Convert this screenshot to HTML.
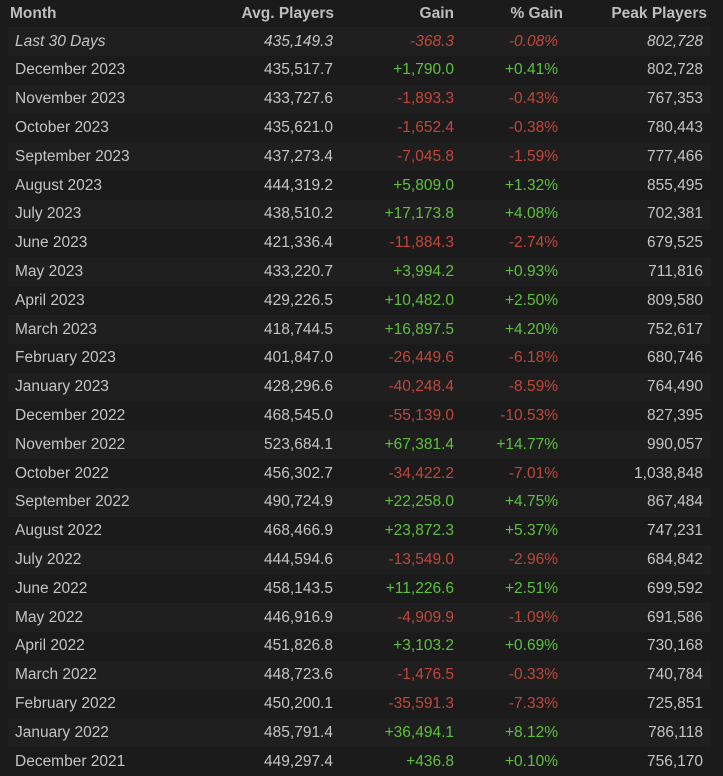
<!DOCTYPE html>
<html><head><style>
body{margin:0;background:#1b1b1b;width:723px;height:775px;overflow:hidden;font-family:"Liberation Sans",Arial,sans-serif;font-size:15.5px;color:#c4c4c4}
.h{position:absolute;top:1px;left:0;width:723px;height:26px;font-weight:bold;color:#bdbdbd;font-size:15.5px}
.r{position:absolute;left:0;width:723px;height:28.8px}
.r.e::before{content:"";position:absolute;left:8px;right:12px;top:0;bottom:0;background:#1f1f1f}
.c{position:absolute;top:50%;transform:translateY(-50%);white-space:nowrap}
.m{left:15px}.a{right:390px}.g{right:269px}.p{right:165px}.k{right:20px}
.h .m{left:10px}.h .a{right:389px}.h .g{right:269px}.h .p{right:160px}.h .k{right:16px}
.red{color:#c0473a}.grn{color:#5fc03f}
.i{font-style:italic}
</style></head><body>
<div class="h"><span class="c m">Month</span><span class="c a">Avg. Players</span><span class="c g">Gain</span><span class="c p">% Gain</span><span class="c k">Peak Players</span></div>
<div id="t"></div>
<script>
var d=[["Last 30 Days","435,149.3","-368.3","-0.08%","802,728"],
["December 2023","435,517.7","+1,790.0","+0.41%","802,728"],
["November 2023","433,727.6","-1,893.3","-0.43%","767,353"],
["October 2023","435,621.0","-1,652.4","-0.38%","780,443"],
["September 2023","437,273.4","-7,045.8","-1.59%","777,466"],
["August 2023","444,319.2","+5,809.0","+1.32%","855,495"],
["July 2023","438,510.2","+17,173.8","+4.08%","702,381"],
["June 2023","421,336.4","-11,884.3","-2.74%","679,525"],
["May 2023","433,220.7","+3,994.2","+0.93%","711,816"],
["April 2023","429,226.5","+10,482.0","+2.50%","809,580"],
["March 2023","418,744.5","+16,897.5","+4.20%","752,617"],
["February 2023","401,847.0","-26,449.6","-6.18%","680,746"],
["January 2023","428,296.6","-40,248.4","-8.59%","764,490"],
["December 2022","468,545.0","-55,139.0","-10.53%","827,395"],
["November 2022","523,684.1","+67,381.4","+14.77%","990,057"],
["October 2022","456,302.7","-34,422.2","-7.01%","1,038,848"],
["September 2022","490,724.9","+22,258.0","+4.75%","867,484"],
["August 2022","468,466.9","+23,872.3","+5.37%","747,231"],
["July 2022","444,594.6","-13,549.0","-2.96%","684,842"],
["June 2022","458,143.5","+11,226.6","+2.51%","699,592"],
["May 2022","446,916.9","-4,909.9","-1.09%","691,586"],
["April 2022","451,826.8","+3,103.2","+0.69%","730,168"],
["March 2022","448,723.6","-1,476.5","-0.33%","740,784"],
["February 2022","450,200.1","-35,591.3","-7.33%","725,851"],
["January 2022","485,791.4","+36,494.1","+8.12%","786,118"],
["December 2021","449,297.4","+436.8","+0.10%","756,170"]];
var h="";
d.forEach(function(r,i){var cl=r[2][0]=="-"?"red":"grn";var it=i==0?" i":"";
h+='<div class="r'+(i%2==0?' e':'')+'" style="top:'+(27.2+i*28.8)+'px"><span class="c m'+it+'">'+r[0]+'</span><span class="c a'+it+'">'+r[1]+'</span><span class="c g '+cl+it+'">'+r[2]+'</span><span class="c p '+cl+it+'">'+r[3]+'</span><span class="c k'+it+'">'+r[4]+'</span></div>';});
document.getElementById("t").innerHTML=h;
</script>
</body></html>
